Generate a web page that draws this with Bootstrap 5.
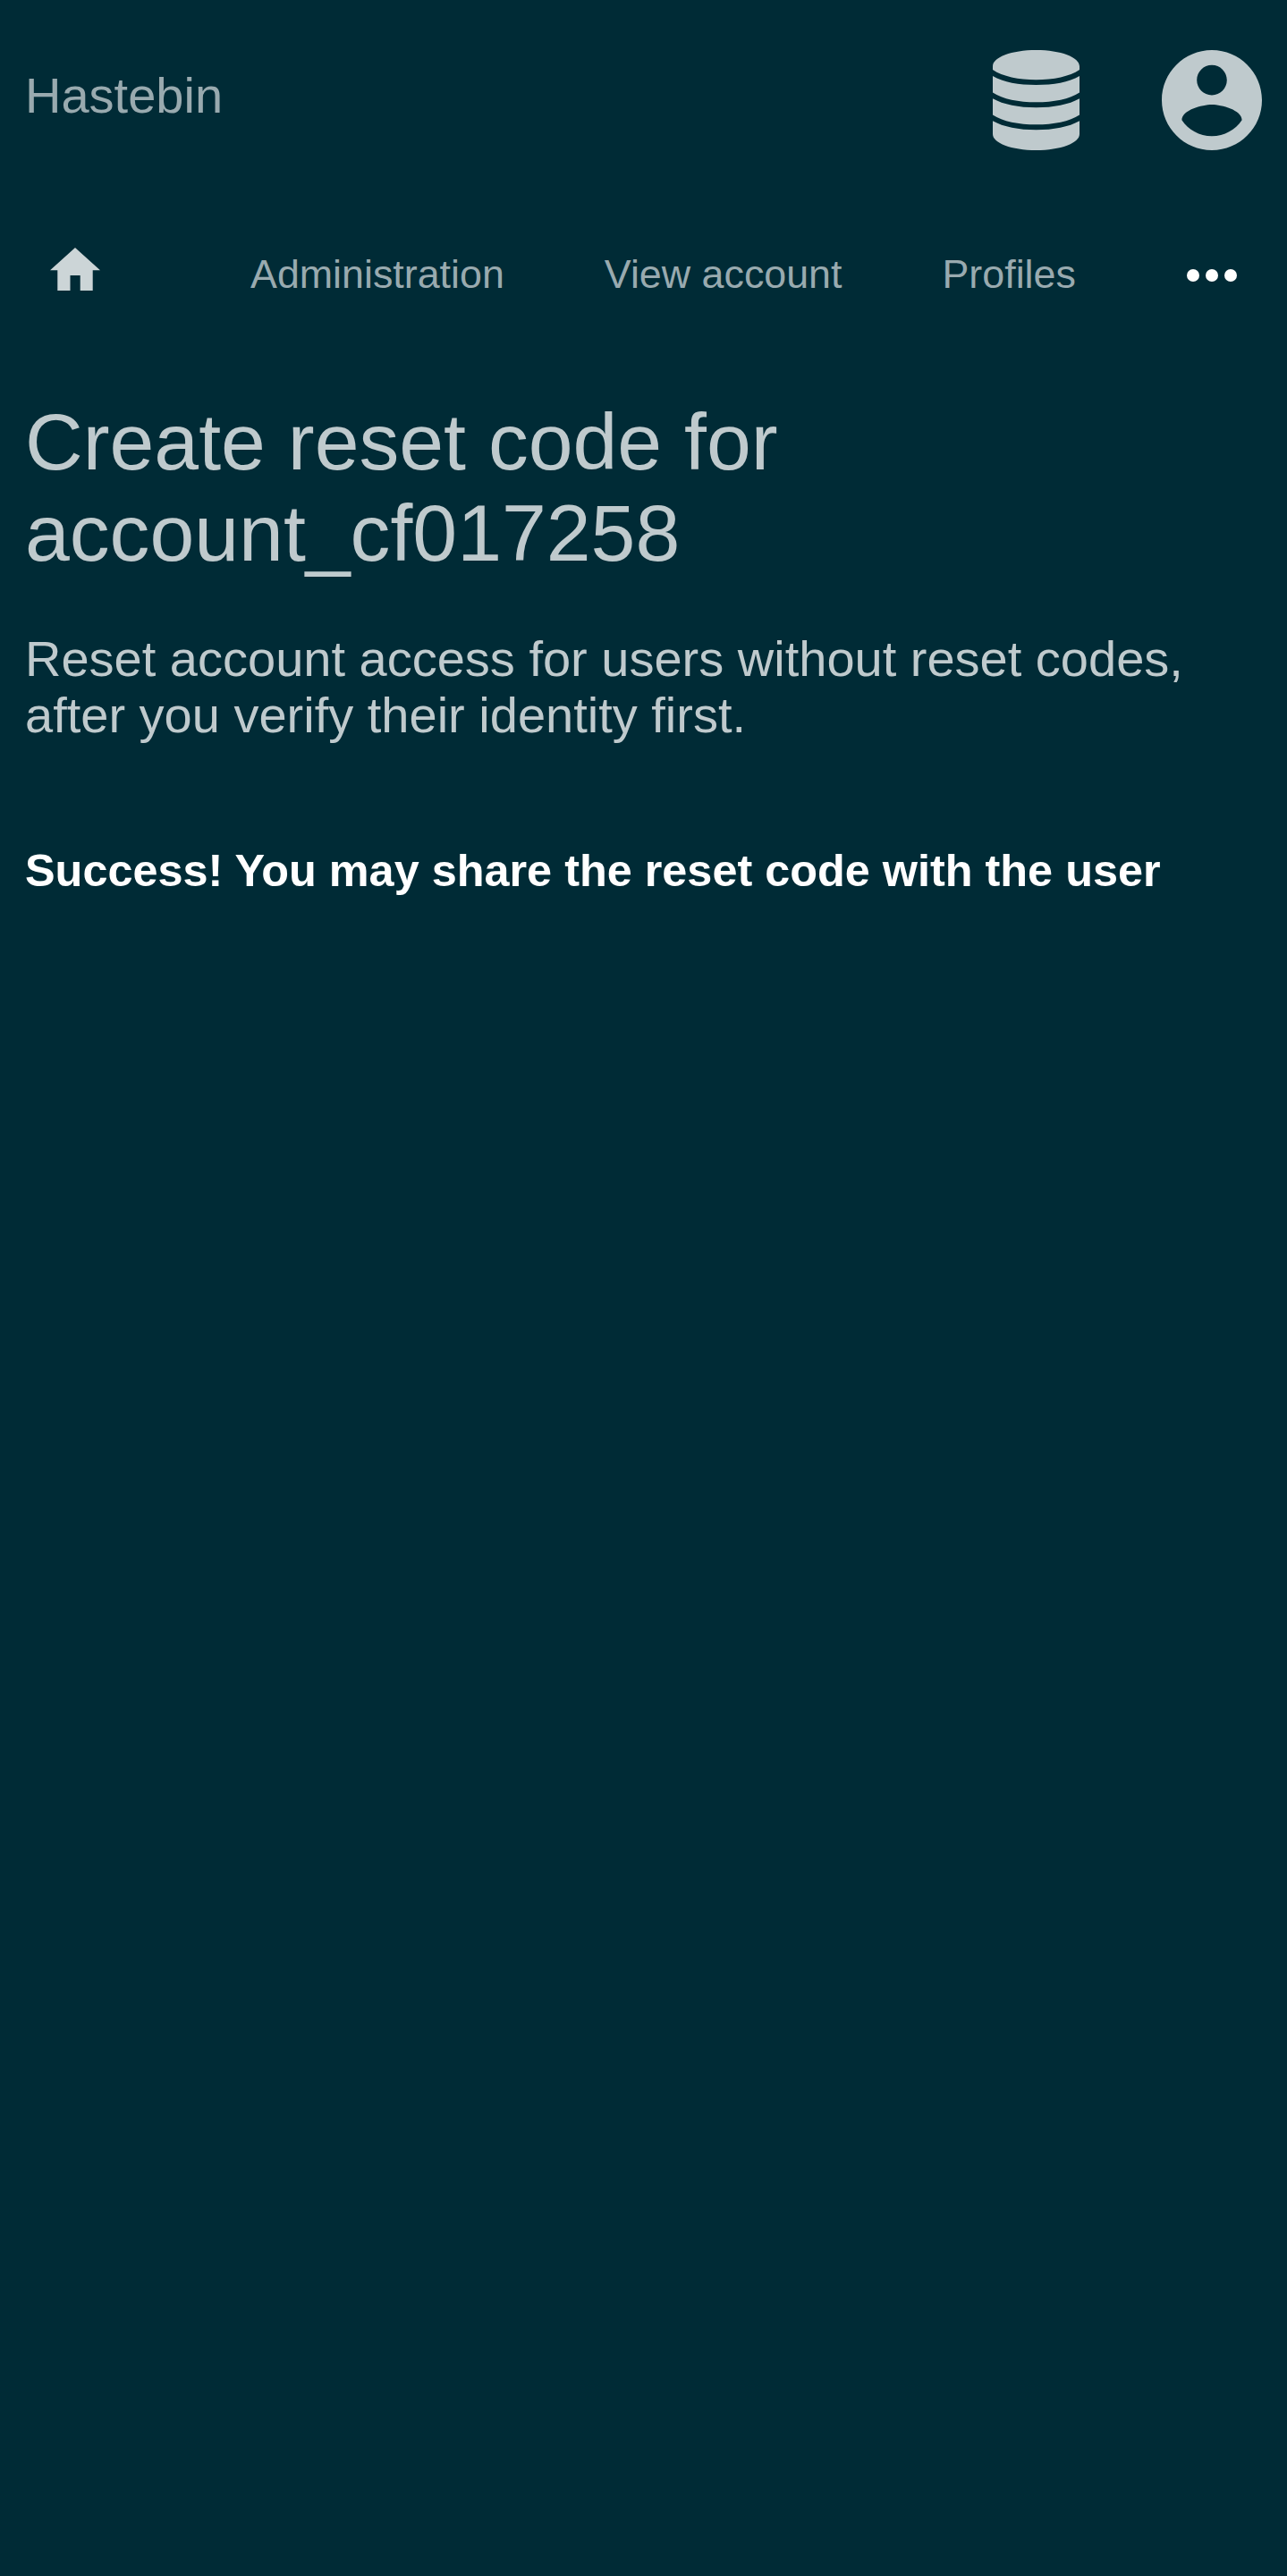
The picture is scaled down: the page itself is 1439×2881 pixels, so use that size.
<!DOCTYPE html>
<html lang="en">
<head>
<meta charset="utf-8">
<meta name="viewport" content="width=device-width, initial-scale=1">
<title>Hastebin</title>
<link href="https://cdn.jsdelivr.net/npm/bootstrap@5.3.0/dist/css/bootstrap.min.css" rel="stylesheet">
<style>
body { background: #002b36; color: #bfcacd; font-family: "Liberation Sans", Arial, sans-serif; font-size: 56px; line-height: 63px; min-height: 100vh; }
.page-pad { padding: 0 28px; }
.topbar { height: 224px; }
.brand, .brand:hover, .menu-link, .menu-link:hover { color: #99aaaf; text-decoration: none; }
.brand { margin-bottom: 11px; }
.top-icons { gap: 92px; }
.menu-row { height: 168px; padding-left: 56px; padding-right: 18px; font-size: 44.8px; line-height: 52px; }
.menu-row svg, .top-icons svg { display: block; }
.home-link { margin-right: 168px; }
.home-link svg { margin-bottom: 14px; }
.menu-links { gap: 112px; margin-bottom: 4px; }
.title { font-size: 89.6px; line-height: 102px; font-weight: 400; margin: 51px 0 58px; color: inherit; }
.intro { margin: 0; }
.notice { font-size: 50.4px; line-height: 57px; font-weight: 700; color: #fff; margin: 114px 0 0; }
</style>
</head>
<body>
<header>
  <div class="topbar page-pad d-flex align-items-center justify-content-between">
    <a class="brand" href="#">Hastebin</a>
    <div class="top-icons d-flex align-items-center">
      <a href="#" aria-label="Storage"><svg width="97" height="112" viewBox="0 0 97 112" fill="#bfcacd"><path d="M0 18C0 8 21 0 48.500 0S97 8 97 18V22C86 29.500 68 33.300 48.500 33.300S11 29.500 0 22ZM0 29C12 36 29 39 48.500 39S85 36 97 29V47.500C86 55 68 58.300 48.500 58.300S11 55 0 47.500ZM0 54.300C12 61 29 64.300 48.500 64.300S85 61 97 54.300V72.500C86 80 68 83.300 48.500 83.300S11 80 0 72.500ZM0 79.300C12 86 29 89.300 48.500 89.300S85 86 97 79.300V94C97 104 76 112 48.500 112S0 104 0 94Z"/></svg></a>
      <a href="#" aria-label="Account"><svg width="112" height="112" viewBox="2 2 20 20" fill="#bfcacd"><path d="M12 2C6.480 2 2 6.480 2 12s4.480 10 10 10 10-4.480 10-10S17.520 2 12 2zm0 3c1.660 0 3 1.340 3 3s-1.340 3-3 3-3-1.340-3-3 1.340-3 3-3zm0 14.200c-2.500 0-4.710-1.280-6-3.220.030-1.990 4-3.080 6-3.080 1.990 0 5.970 1.090 6 3.080-1.290 1.940-3.500 3.220-6 3.220z"/></svg></a>
    </div>
  </div>
  <nav class="menu-row d-flex align-items-center">
    <a class="home-link" href="#" aria-label="Home"><svg width="56" height="48" viewBox="0 0 56 48" fill="#ccd5d7"><path d="M28 0L56 25.300H47.700V48H33.700V30.900H22.500V48H8.300V25.300H0Z"/></svg></a>
    <div class="menu-links d-flex">
      <a class="menu-link" href="#">Administration</a>
      <a class="menu-link" href="#">View account</a>
      <a class="menu-link" href="#">Profiles</a>
    </div>
    <a class="ms-auto me-4" href="#" aria-label="More"><svg width="84" height="84" viewBox="0 0 24 24" fill="#fff"><circle cx="6" cy="12" r="2"/><circle cx="12" cy="12" r="2"/><circle cx="18" cy="12" r="2"/></svg></a>
  </nav>
</header>
<main class="page-pad">
  <h1 class="title">Create reset code for account_cf017258</h1>
  <p class="intro">Reset account access for users without reset codes, after you verify their identity first.</p>
  <h2 class="notice">Success! You may share the reset code with the user</h2>
</main>
<script src="https://cdn.jsdelivr.net/npm/bootstrap@5.3.0/dist/js/bootstrap.bundle.min.js"></script>
</body>
</html>
